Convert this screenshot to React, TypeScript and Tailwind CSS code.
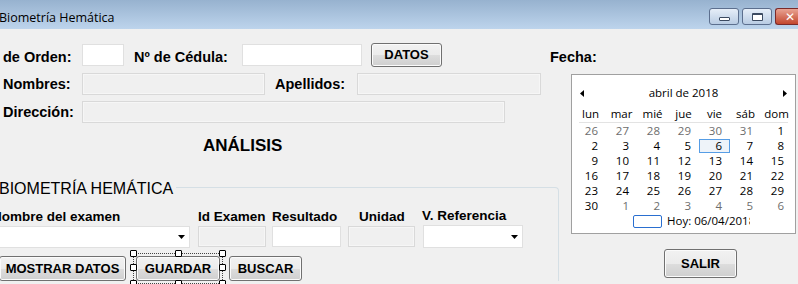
import React from 'react';

const btn =
  'flex items-center justify-center rounded-[3px] border border-[#707070] bg-[linear-gradient(to_bottom,#f2f2f2_0%,#ebebeb_50%,#dddddd_51%,#cfcfcf_100%)] shadow-[inset_0_0_0_1px_#fbfbfb] font-bold text-[13px] text-black';
const box = 'border border-[#e0e0e0] bg-white';
const boxOff = 'border border-[#d9d9d9] bg-[#f0f0f0] shadow-[inset_0_0_0_1px_#f6f6f6]';
const label = 'font-bold text-[14.5px] leading-[17px] text-black whitespace-nowrap';
const small = 'font-bold text-[13.5px] leading-[16px] text-black whitespace-nowrap';

// [day, greyed]
const weeks: [number, boolean][][] = [
  [[26, true], [27, true], [28, true], [29, true], [30, true], [31, true], [1, false]],
  [[2, false], [3, false], [4, false], [5, false], [6, false], [7, false], [8, false]],
  [[9, false], [10, false], [11, false], [12, false], [13, false], [14, false], [15, false]],
  [[16, false], [17, false], [18, false], [19, false], [20, false], [21, false], [22, false]],
  [[23, false], [24, false], [25, false], [26, false], [27, false], [28, false], [29, false]],
  [[30, false], [1, true], [2, true], [3, true], [4, true], [5, true], [6, true]],
];
const dayNames = ['lun', 'mar', 'mié', 'jue', 'vie', 'sáb', 'dom'];

function Arrow() {
  return (
    <svg width="7" height="4" viewBox="0 0 7 4">
      <path d="M0 0h7L3.5 4z" fill="#000" />
    </svg>
  );
}

function Caption() {
  return (
    <div className="flex h-[29px] items-start bg-[linear-gradient(to_bottom,#97b2cf,#bdd4ec)]">
      <span className="ml-[-1px] mt-[9px] font-['Open_Sans'] text-[12.5px] leading-[17px] text-black">Biometría Hemática</span>
      <div className="ml-auto mt-[8px] flex gap-[3px]">
        <div className="flex h-[17px] w-[30px] items-end justify-center rounded-[3px] border border-[#5c6f8e] bg-[linear-gradient(to_bottom,#e6eef8,#b9cce3)] pb-[3px]">
          <div className="h-[4px] w-[11px] rounded-[1px] border border-[#3b4a61] bg-white" />
        </div>
        <div className="flex h-[17px] w-[30px] items-center justify-center rounded-[3px] border border-[#5c6f8e] bg-[linear-gradient(to_bottom,#e6eef8,#b9cce3)]">
          <div className="h-[8px] w-[11px] rounded-[1px] border border-[#3b4a61] border-t-2 bg-white" />
        </div>
        <div className="flex h-[17px] w-[23px] items-center justify-center rounded-l-[3px] border border-r-0 border-[#7a2a2a] bg-[linear-gradient(to_bottom,#e8a393,#c3462d)] pl-[6px]">
          <span className="font-['DejaVu_Sans'] text-[12px] font-bold leading-none text-white">✕</span>
        </div>
      </div>
    </div>
  );
}

function Calendar() {
  return (
    <div className="ml-[11px] mt-[8px] h-[160px] w-[225px] border border-[#a0a0a0] bg-white font-['Open_Sans'] text-[11.5px] text-black">
      <div className="mt-[10px] flex h-[16px] items-center justify-between px-[8px] leading-[16px]">
        <svg width="4" height="7" viewBox="0 0 4 7">
          <path d="M4 0v7L0 3.5z" fill="#000" />
        </svg>
        <span>abril de 2018</span>
        <svg width="4" height="7" viewBox="0 0 4 7">
          <path d="M0 0v7L4 3.5z" fill="#000" />
        </svg>
      </div>
      <div className="ml-[3px] mt-[5px] grid h-[16px] w-[217px] grid-cols-7 items-center leading-[16px]">
        {dayNames.map((d) => (
          <span key={d} className="text-center">
            {d}
          </span>
        ))}
      </div>
      <div className="ml-[7px] h-px w-[209px] bg-[#e3e3e3]" />
      <div className="ml-[3px] w-[217px]">
        {weeks.map((w, i) => (
          <div key={i} className="grid h-[15px] grid-cols-7 leading-[15px]">
            {w.map(([d, g], j) =>
              i === 1 && j === 4 ? (
                <span key={j} className="flex h-[14px] items-center justify-end self-center border border-[#569de5] bg-[#eef3f9] pr-[7px] leading-none">
                  {d}
                </span>
              ) : (
                <span key={j} className={g ? 'pr-[8px] text-right text-[#6d6d6d]' : 'pr-[8px] text-right'}>
                  {d}
                </span>
              ),
            )}
          </div>
        ))}
      </div>
      <div className="flex h-[16px] items-center">
        <div className="ml-[61px] h-[13px] w-[29px] rounded-[2px] border border-[#2a6fd0]" />
        <span className="ml-[5px] w-[83px] overflow-hidden whitespace-nowrap leading-[16px]">Hoy: 06/04/2018</span>
      </div>
    </div>
  );
}

export default function App() {
  return (
    <div className="h-[284px] w-[798px] overflow-hidden bg-[#f0f0f0] font-['Liberation_Sans'] text-black">
      <Caption />
      <div className="flex">
        {/* left side: datos del paciente + biometría */}
        <div className="w-[560px] shrink-0">
          <div className="mt-[14px] flex h-[24px] items-center">
            <span className={`${label} mt-[4px] w-[82px] pl-[3px]`}>de Orden:</span>
            <div className={`${box} h-[22px] w-[42px]`} />
            <span className={`${label} ml-[10px] mt-[4px] w-[108px]`}>Nº de Cédula:</span>
            <div className={`${box} h-[22px] w-[120px]`} />
            <div className={`${btn} ml-[9px] h-[24px] w-[71px] border-[#8a8a8a]`}>DATOS</div>
          </div>
          <div className="mt-[6px] flex h-[22px] items-center">
            <span className={`${label} w-[82px] pl-[3px]`}>Nombres:</span>
            <div className={`${boxOff} h-[22px] w-[183px]`} />
            <span className={`${label} ml-[10px] w-[82px]`}>Apellidos:</span>
            <div className={`${boxOff} h-[22px] w-[184px]`} />
          </div>
          <div className="mt-[6px] flex h-[22px] items-center">
            <span className={`${label} w-[82px] pl-[3px]`}>Dirección:</span>
            <div className={`${boxOff} h-[22px] w-[423px]`} />
          </div>
          <div className="mt-[13px] pl-[203px] text-[17px] font-bold leading-[20px]">ANÁLISIS</div>

          <div className="ml-[-10px] mt-[31px] w-[569px] rounded-tr-[4px] border-r border-t border-[#d5dfe5]">
            <div className="ml-[9px] mt-[-9px] w-fit bg-[#f0f0f0] pr-[3px] text-[16px] leading-[19px]">BIOMETRÍA HEMÁTICA</div>
            <div className="mt-[11px] flex">
              <span className={`${small} ml-[2px] w-[206px]`}>Nombre del examen</span>
              <span className={`${small} w-[74px]`}>Id Examen</span>
              <span className={`${small} w-[87px]`}>Resultado</span>
              <span className={`${small} w-[63px]`}>Unidad</span>
              <span className={`${small} mt-[-1px]`}>V. Referencia</span>
            </div>
            <div className="flex h-[23px] items-center">
              <div className={`${box} flex h-[22px] w-[200px] items-center justify-end pr-[4px]`}>
                <Arrow />
              </div>
              <div className={`${boxOff} ml-[8px] h-[21px] w-[68px]`} />
              <div className={`${box} ml-[6px] h-[21px] w-[69px]`} />
              <div className={`${boxOff} ml-[7px] h-[21px] w-[67px]`} />
              <div className={`${box} ml-[8px] flex h-[23px] w-[100px] items-center justify-end pr-[4px]`}>
                <Arrow />
              </div>
            </div>
            <div className="mt-[8px] flex h-[25px]">
              <div className={`${btn} ml-[9px] w-[127px]`}>MOSTRAR DATOS</div>
              <div className="relative ml-[10px] w-[84px]">
                <div className={`${btn} h-full w-full`}>GUARDAR</div>
                {/* designer selection */}
                <div className="absolute inset-[-3px] border border-dotted border-[#444]" />
                <div className="absolute left-[-6px] top-[-6px] h-[7px] w-[7px] rounded-[1px] border border-black bg-white" />
                <div className="absolute left-[39px] top-[-6px] h-[7px] w-[7px] rounded-[1px] border border-black bg-white" />
                <div className="absolute right-[-6px] top-[-6px] h-[7px] w-[7px] rounded-[1px] border border-black bg-white" />
                <div className="absolute left-[-6px] top-[8px] h-[7px] w-[7px] rounded-[1px] border border-black bg-white" />
                <div className="absolute right-[-6px] top-[8px] h-[7px] w-[7px] rounded-[1px] border border-black bg-white" />
                <div className="absolute bottom-[-6px] left-[-6px] h-[7px] w-[7px] rounded-[1px] border border-black bg-white" />
                <div className="absolute bottom-[-6px] left-[39px] h-[7px] w-[7px] rounded-[1px] border border-black bg-white" />
                <div className="absolute bottom-[-6px] right-[-6px] h-[7px] w-[7px] rounded-[1px] border border-black bg-white" />
              </div>
              <div className={`${btn} ml-[9px] w-[73px]`}>BUSCAR</div>
            </div>
          </div>
        </div>

        {/* right side: fecha */}
        <div className="flex-1">
          <div className={`${label} ml-[-10px] mt-[20px]`}>Fecha:</div>
          <Calendar />
          <div className={`${btn} ml-[104px] mt-[15px] h-[29px] w-[73px]`}>SALIR</div>
        </div>
      </div>
    </div>
  );
}
